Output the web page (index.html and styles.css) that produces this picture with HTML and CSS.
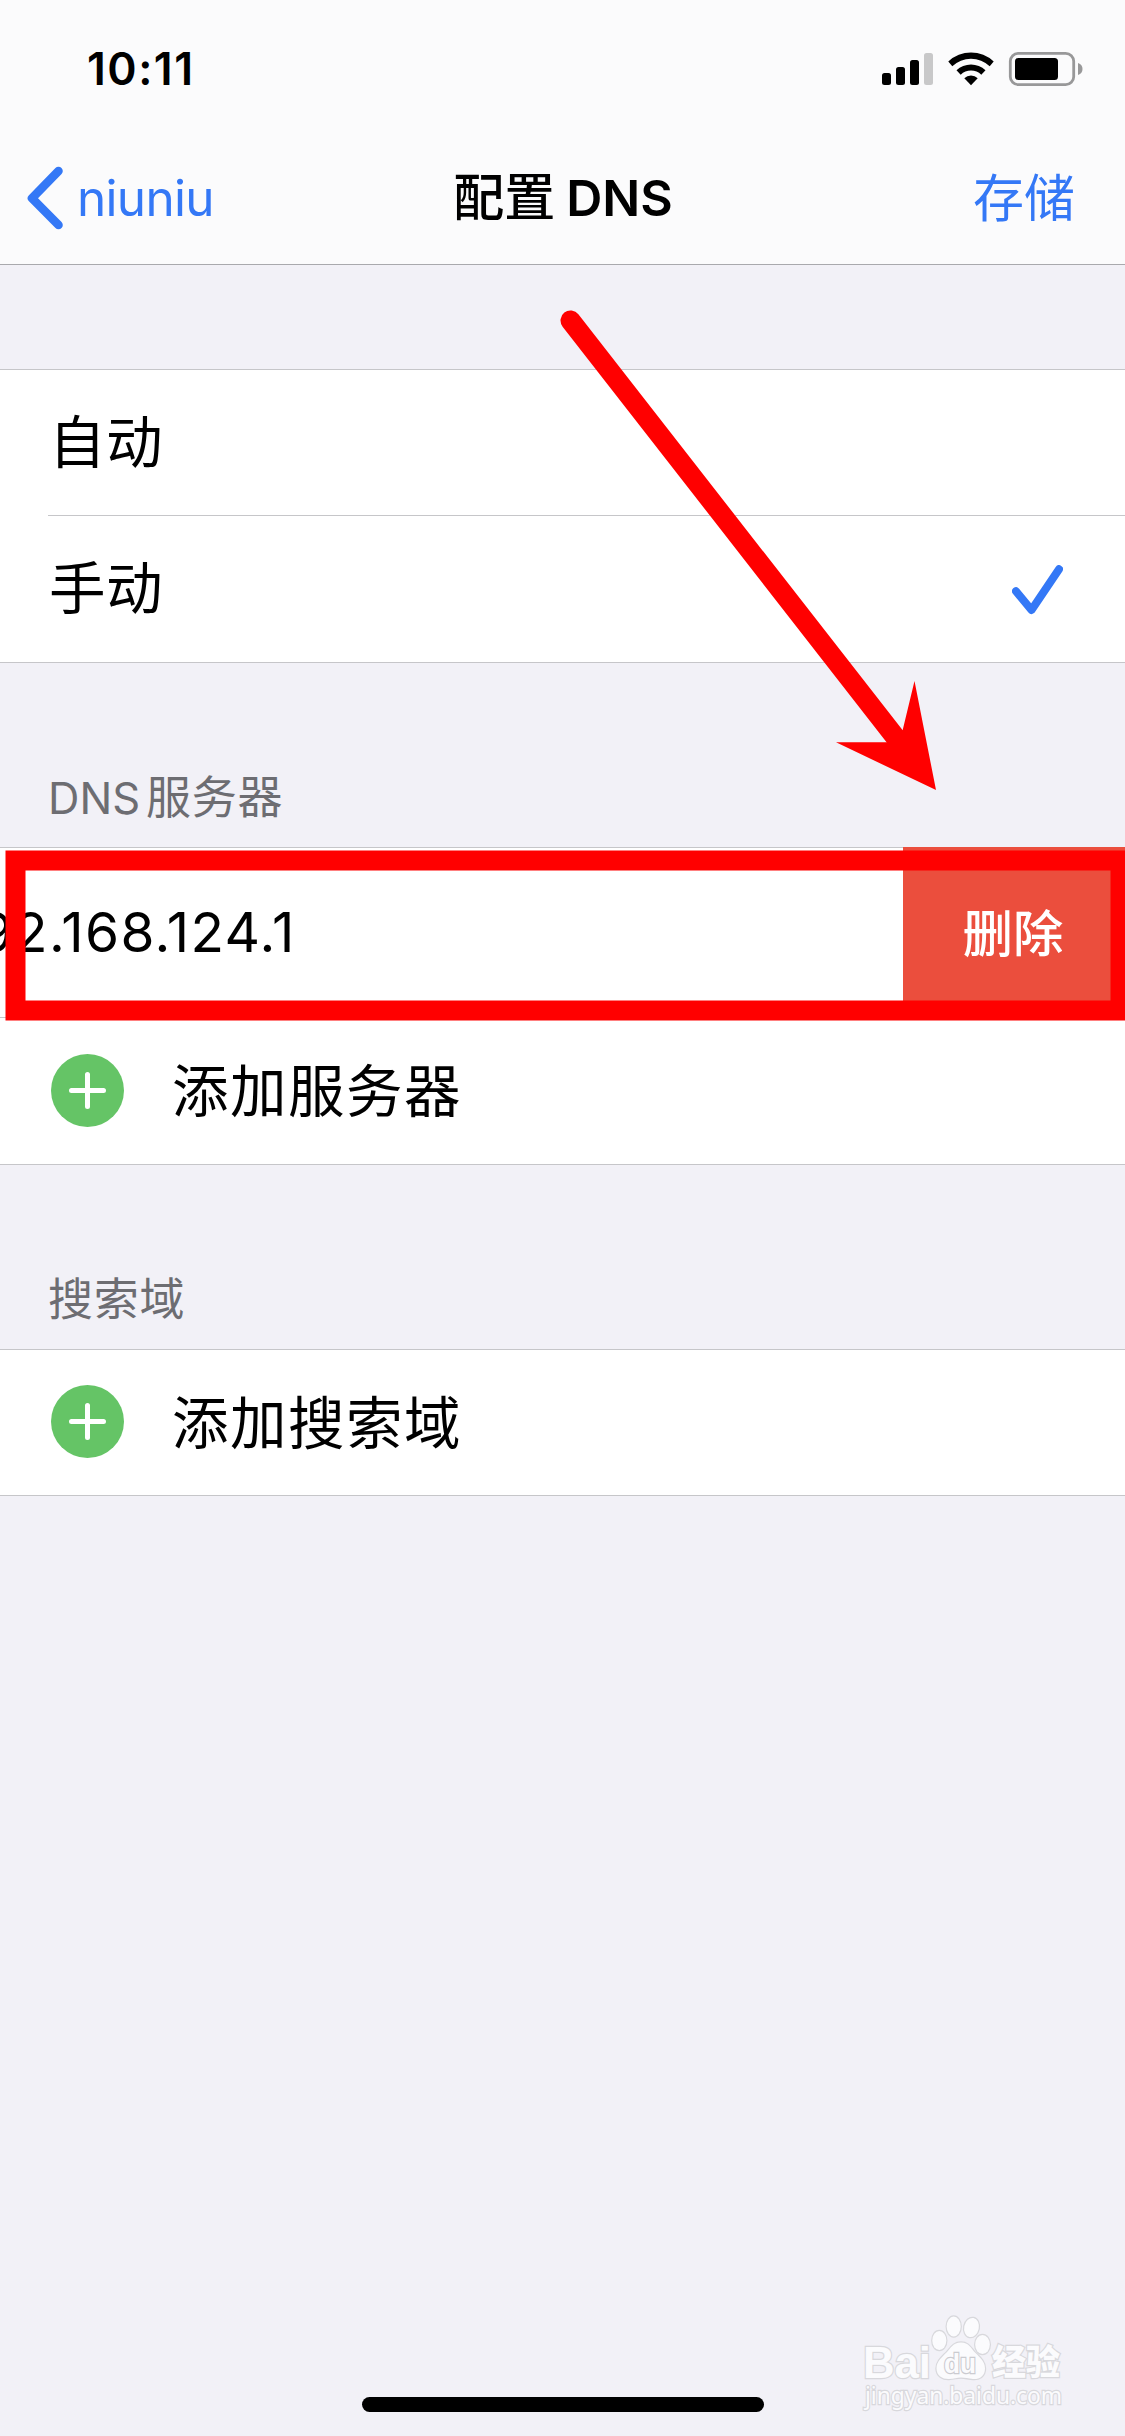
FILE: index.html
```html
<!DOCTYPE html>
<html lang="zh-CN">
<head>
<meta charset="utf-8">
<title>配置 DNS</title>
<link rel="stylesheet" href="styles.css">
</head>
<body>
<div class="screen">
  <header class="top">
    <div class="status">
      <span class="clock">10:11</span>
      <svg class="status-icons" width="202" height="36" viewBox="881 51 202 36">
        <rect x="882" y="73" width="9" height="12" rx="2.5"/>
        <rect x="896" y="67" width="9" height="18" rx="2.5"/>
        <rect x="910" y="60" width="9" height="25" rx="2.5"/>
        <rect x="924" y="53" width="9" height="32" rx="2.5" fill="#c8c8c9"/>
        <path d="M948.3 61.5a33 33 0 0 1 45.400 0l-4 4.700a27 27 0 0 0-37.400 0z"/>
        <path d="M956.500 70.200a21 21 0 0 1 29 0l-4.200 4.500a15 15 0 0 0-20.600 0z"/>
        <path d="M964.300 78.200a9.500 9.500 0 0 1 13.400 0l-6.700 7z"/>
        <rect x="1010.300" y="53.300" width="63.400" height="31.400" rx="8" fill="none" stroke="#989899" stroke-width="2.800"/>
        <rect x="1015" y="58" width="43" height="22" rx="3.500"/>
        <path d="M1078 63q4.500 1.500 4.500 6t-4.500 6z" fill="#989899"/>
      </svg>
    </div>
    <nav class="nav">
      <a class="back"><svg width="37" height="64" viewBox="0 0 37 64"><path d="M31.500 5 5 32.200 31.500 59" fill="none" stroke="#3478f6" stroke-width="8.600" stroke-linecap="round" stroke-linejoin="round"/></svg><span>niuniu</span></a>
      <h1 class="title"><span class="zh">配置</span><span class="latin">DNS</span></h1>
      <a class="save">存储</a>
    </nav>
  </header>
  <main>
    <section class="group modes">
      <div class="row"><span>自动</span></div>
      <div class="row ruled"><span>手动</span>
        <svg class="check" width="51" height="50" viewBox="0 0 51 50"><path d="M4 26.200 19.500 45 47 4.200" fill="none" stroke="#3478f6" stroke-width="8" stroke-linecap="round" stroke-linejoin="round"/></svg>
      </div>
    </section>
    <h2 class="label dns-label"><span class="latin">DNS</span><span>服务器</span></h2>
    <section class="group">
      <div class="swiped"><span class="ip">192.168.124.1</span><button class="delete">删除</button></div>
      <div class="row add"><svg class="plus" width="73" height="73" viewBox="0 0 73 73"><circle cx="36.500" cy="36.500" r="36.500" fill="#65c466"/><path d="M20.500 36.500h32M36.500 20.500v32" stroke="#fff" stroke-width="5" stroke-linecap="round"/></svg><span>添加服务器</span></div>
    </section>
    <h2 class="label"><span>搜索域</span></h2>
    <section class="group">
      <div class="row add last"><svg class="plus" width="73" height="73" viewBox="0 0 73 73"><circle cx="36.500" cy="36.500" r="36.500" fill="#65c466"/><path d="M20.500 36.500h32M36.500 20.500v32" stroke="#fff" stroke-width="5" stroke-linecap="round"/></svg><span>添加搜索域</span></div>
    </section>
  </main>
  <div class="home"></div>
  <svg class="arrow" width="380" height="484" viewBox="558 308 380 484" fill="#f00">
    <path d="M570.500 320.500 896 738" stroke="#f00" stroke-width="20" stroke-linecap="round"/>
    <path d="M936 790 836 742.300 886.700 742.300 902.700 730 914.500 681z"/>
  </svg>
  <svg class="frame" width="1125" height="172" viewBox="0 849 1125 172"><rect x="15.500" y="860.500" width="1105" height="150" fill="none" stroke="#f00" stroke-width="20"/></svg>
  <svg class="watermark" width="210" height="110" viewBox="860 2305 210 110" fill="#fbfbfd" stroke="#d8d8dc" stroke-width="2.400" paint-order="stroke">
    <text class="wm-bai" x="863" y="2377.500" textLength="68" lengthAdjust="spacingAndGlyphs">Bai</text>
    <ellipse cx="939.300" cy="2340.500" rx="7" ry="9.500"/>
    <ellipse cx="953.700" cy="2326.500" rx="7" ry="10"/>
    <ellipse cx="971.500" cy="2327.500" rx="7.300" ry="9.700" transform="rotate(12 971.500 2327.500)"/>
    <ellipse cx="982.500" cy="2344.500" rx="7.300" ry="9.500"/>
    <path d="M961 2342.500c8 0 10 6 14 10 5 5 10 9 10 16 0 8-6 11-12 10.500-5-.4-8-1.500-12-1.500s-7 1.300-12 1.500c-6 .3-12.500-3-12.500-10.500 0-7 5-11 10-16 4-4 6.500-10 14.500-10z"/>
    <text class="wm-du" x="944" y="2373" textLength="32" lengthAdjust="spacingAndGlyphs">du</text>
    <text class="wm-zh" x="992" y="2374.500" textLength="68" lengthAdjust="spacingAndGlyphs">经验</text>
    <text class="wm-url" x="865" y="2404" textLength="197" lengthAdjust="spacingAndGlyphs">jingyan.baidu.com</text>
  </svg>
</div>
</body>
</html>
```

FILE: styles.css
```css
* { box-sizing: border-box; }
body { margin: 0; background: #f2f1f7; }
.screen {
  position: relative;
  width: 1125px;
  height: 2436px;
  overflow: hidden;
  background: #f2f1f7;
  color: #000;
  font-family: Inter, "Noto Sans CJK SC", sans-serif;
}
.top { height: 265px; background: #fbfbfc; border-bottom: 1px solid #a9a9ad; }
.status {
  display: flex;
  justify-content: space-between;
  align-items: center;
  height: 132px;
  padding: 6px 42px 0 87px;
}
.clock { font-size: 44.500px; font-weight: 600; line-height: 50px; letter-spacing: 1.500px; }
.nav {
  display: grid;
  grid-template-columns: 1fr auto 1fr;
  align-items: center;
  height: 132px;
  padding: 0 50px 0 27px;
  color: #3478f6;
  font-size: 51px;
  line-height: 60px;
}
.back { display: flex; align-items: center; gap: 13px; font-size: 49.500px; letter-spacing: -0.700px; }
.title {
  display: flex;
  align-items: baseline;
  gap: 11px;
  margin: 0 -12px 0 12px;
  color: #000;
  font-size: 51px;
  font-weight: 500;
}
.title .latin { font-size: 50px; font-weight: 600; }
.save { justify-self: end; padding-top: 2px; }
.group { background: #fff; border: solid #c6c6c9; border-width: 1px 0; }
.modes { margin-top: 104px; }
.row {
  display: flex;
  align-items: center;
  height: 146px;
  padding-left: 49px;
  font-size: 56.500px;
  line-height: 80px;
  letter-spacing: 1.500px;
}
.row span { padding-top: 2px; }
.modes .row { height: 145px; }
.modes .row span { padding-top: 1px; letter-spacing: 0.500px; }
.modes .ruled {
  height: 147px;
  justify-content: space-between;
  padding-right: 62px;
  background: linear-gradient(#c6c6c9, #c6c6c9) 48px 0 / 100% 1px no-repeat;
}
.check { margin-top: 2px; }
.label {
  display: flex;
  align-items: baseline;
  gap: 6px;
  height: 184px;
  margin: 0;
  padding: 102px 0 0 48px;
  color: #6d6d72;
  font-size: 45px;
  font-weight: 400;
  line-height: 66px;
  letter-spacing: 0.700px;
}
.label .latin { font-size: 43.500px; letter-spacing: 0; }
.swiped {
  display: flex;
  height: 170px;
  justify-content: space-between;
  align-items: center;
  border-bottom: 1px solid #c6c6c9;
}
.ip { margin: -2px 0 0 -45px; font-size: 55px; letter-spacing: 1.300px; }
.delete {
  align-self: stretch;
  width: 222px;
  margin-top: -1px;
  padding: 3px 2px 0 0;
  border: 0;
  background: #eb4e3d;
  color: #fff;
  font: 500 50.500px/60px Inter, "Noto Sans CJK SC", sans-serif;
}
.add { gap: 48px; padding-left: 51px; }
.plus { margin-bottom: 1px; }
.last { height: 145px; }
.last .plus { margin-bottom: 2px; }
.home {
  position: absolute;
  left: 362px;
  bottom: 24px;
  width: 402px;
  height: 15px;
  border-radius: 8px;
  background: #000;
}
.arrow { position: absolute; left: 558px; top: 308px; }
.frame { position: absolute; left: 0; top: 849px; }
.watermark { position: absolute; left: 860px; top: 2305px; overflow: visible; }
.wm-bai { font: 700 44px "Liberation Sans", sans-serif; }
.wm-du { font: 700 28px "Liberation Sans", sans-serif; stroke: #cbcbd0; }
.wm-zh { font: 900 35px "Noto Sans CJK SC", sans-serif; }
.wm-url { font: 400 24px "Noto Sans", sans-serif; }
```
